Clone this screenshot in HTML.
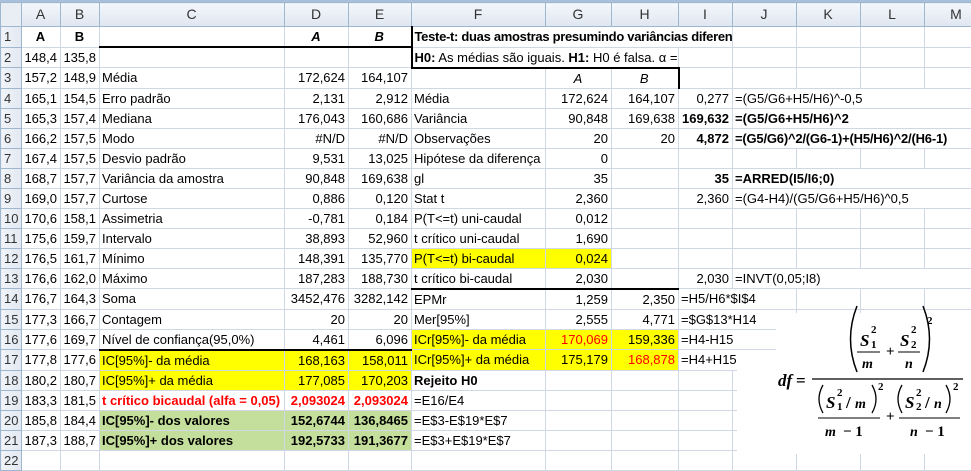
<!DOCTYPE html>
<html><head><meta charset="utf-8"><style>
body{margin:0;width:971px;height:454px;overflow:hidden;background:#fff;position:relative;font-family:"Liberation Sans",Arial,sans-serif;font-size:13px;color:#000}
table{border-collapse:collapse;table-layout:fixed;width:989px;position:absolute;left:0;top:2px}
td{border:1px solid #d0d7e5;height:19px;padding:0 3px 0 2px;white-space:nowrap;overflow:hidden;line-height:19px}
tr.h td{background:linear-gradient(#f4f7fb,#dfe6f0);border-color:#9eb6ce;text-align:center;color:#333;height:23px;font-size:14px}
td.rh{background:linear-gradient(90deg,#f1f4f9,#e2e8f1);border-color:#9eb6ce;text-align:left;color:#333;padding-left:3px}
.r{text-align:right}.c{text-align:center}.b{font-weight:bold}.i{font-style:italic}
.y{background:#ffff00}.g{background:#c4df9b}.red{color:#ff0000}
.bb{border-bottom:2px solid #000}.bl{border-left:2px solid #000}.br{border-right:2px solid #000}
.topbar{position:absolute;left:0;top:0;width:971px;height:3px;background:#a9c0dd}
</style></head><body>
<div class="topbar"></div>
<table>
<colgroup><col style="width:21px"><col style="width:39px"><col style="width:39px"><col style="width:185px"><col style="width:64px"><col style="width:63px"><col style="width:134px"><col style="width:66px"><col style="width:67px"><col style="width:54px"><col style="width:64px"><col style="width:64px"><col style="width:64px"><col style="width:64px"></colgroup>
<tr class="h"><td style="background:#e9eef5"></td><td>A</td><td>B</td><td>C</td><td>D</td><td>E</td><td>F</td><td>G</td><td>H</td><td>I</td><td>J</td><td>K</td><td>L</td><td>M</td></tr>
<tr><td class="rh">1</td><td class="c b">A</td><td class="c b">B</td><td class="bb"></td><td class="c b i bb">A</td><td class="c b i bb">B</td><td colspan="4" class="b bl" style="letter-spacing:-0.3px">Teste-t: duas amostras presumindo variâncias diferentes</td><td></td><td></td><td></td><td></td></tr>
<tr><td class="rh">2</td><td class="r">148,4</td><td class="r">135,8</td><td></td><td></td><td></td><td colspan="3" class="bb bl"><b>H0:</b> As médias são iguais. <b>H1:</b> H0 é falsa. α = 0,05.</td><td></td><td></td><td></td><td></td><td></td></tr>
<tr><td class="rh">3</td><td class="r">157,2</td><td class="r">148,9</td><td>Média</td><td class="r">172,624</td><td class="r">164,107</td><td></td><td class="c i">A</td><td class="c i br">B</td><td></td><td></td><td></td><td></td><td></td></tr>
<tr><td class="rh">4</td><td class="r">165,1</td><td class="r">154,5</td><td>Erro padrão</td><td class="r">2,131</td><td class="r">2,912</td><td>Média</td><td class="r">172,624</td><td class="r">164,107</td><td class="r">0,277</td><td colspan="4">=(G5/G6+H5/H6)^-0,5</td></tr>
<tr><td class="rh">5</td><td class="r">165,3</td><td class="r">157,4</td><td>Mediana</td><td class="r">176,043</td><td class="r">160,686</td><td>Variância</td><td class="r">90,848</td><td class="r">169,638</td><td class="r b">169,632</td><td colspan="4" class="b">=(G5/G6+H5/H6)^2</td></tr>
<tr><td class="rh">6</td><td class="r">166,2</td><td class="r">157,5</td><td>Modo</td><td class="r">#N/D</td><td class="r">#N/D</td><td>Observações</td><td class="r">20</td><td class="r">20</td><td class="r b">4,872</td><td colspan="4" class="b" style="letter-spacing:-0.2px">=(G5/G6)^2/(G6-1)+(H5/H6)^2/(H6-1)</td></tr>
<tr><td class="rh">7</td><td class="r">167,4</td><td class="r">157,5</td><td>Desvio padrão</td><td class="r">9,531</td><td class="r">13,025</td><td>Hipótese da diferença</td><td class="r">0</td><td></td><td></td><td></td><td></td><td></td><td></td></tr>
<tr><td class="rh">8</td><td class="r">168,7</td><td class="r">157,7</td><td>Variância da amostra</td><td class="r">90,848</td><td class="r">169,638</td><td>gl</td><td class="r">35</td><td></td><td class="r b">35</td><td colspan="4" class="b">=ARRED(I5/I6;0)</td></tr>
<tr><td class="rh">9</td><td class="r">169,0</td><td class="r">157,7</td><td>Curtose</td><td class="r">0,886</td><td class="r">0,120</td><td>Stat t</td><td class="r">2,360</td><td></td><td class="r">2,360</td><td colspan="4">=(G4-H4)/(G5/G6+H5/H6)^0,5</td></tr>
<tr><td class="rh">10</td><td class="r">170,6</td><td class="r">158,1</td><td>Assimetria</td><td class="r">-0,781</td><td class="r">0,184</td><td>P(T&lt;=t) uni-caudal</td><td class="r">0,012</td><td></td><td></td><td></td><td></td><td></td><td></td></tr>
<tr><td class="rh">11</td><td class="r">175,6</td><td class="r">159,7</td><td>Intervalo</td><td class="r">38,893</td><td class="r">52,960</td><td>t crítico uni-caudal</td><td class="r">1,690</td><td></td><td></td><td></td><td></td><td></td><td></td></tr>
<tr><td class="rh">12</td><td class="r">176,5</td><td class="r">161,7</td><td>Mínimo</td><td class="r">148,391</td><td class="r">135,770</td><td class="y">P(T&lt;=t) bi-caudal</td><td class="r y">0,024</td><td></td><td></td><td></td><td></td><td></td><td></td></tr>
<tr><td class="rh">13</td><td class="r">176,6</td><td class="r">162,0</td><td>Máximo</td><td class="r">187,283</td><td class="r">188,730</td><td class="bb">t crítico bi-caudal</td><td class="r bb">2,030</td><td class="bb"></td><td class="r">2,030</td><td colspan="4">=INVT(0,05;I8)</td></tr>
<tr><td class="rh">14</td><td class="r">176,7</td><td class="r">164,3</td><td>Soma</td><td class="r">3452,476</td><td class="r">3282,142</td><td>EPMr</td><td class="r">1,259</td><td class="r">2,350</td><td colspan="2">=H5/H6*$I$4</td><td></td><td></td><td></td></tr>
<tr><td class="rh">15</td><td class="r">177,3</td><td class="r">166,7</td><td>Contagem</td><td class="r">20</td><td class="r">20</td><td>Mer[95%]</td><td class="r">2,555</td><td class="r">4,771</td><td colspan="2">=$G$13*H14</td><td></td><td></td><td></td></tr>
<tr><td class="rh">16</td><td class="r">177,6</td><td class="r">169,7</td><td class="bb">Nível de confiança(95,0%)</td><td class="r bb">4,461</td><td class="r bb">6,096</td><td class="y">ICr[95%]- da média</td><td class="r y red">170,069</td><td class="r y">159,336</td><td colspan="2">=H4-H15</td><td></td><td></td><td></td></tr>
<tr><td class="rh">17</td><td class="r">177,8</td><td class="r">177,6</td><td class="y">IC[95%]- da média</td><td class="r y">168,163</td><td class="r y">158,011</td><td class="y">ICr[95%]+ da média</td><td class="r y">175,179</td><td class="r y red">168,878</td><td colspan="2">=H4+H15</td><td></td><td></td><td></td></tr>
<tr><td class="rh">18</td><td class="r">180,2</td><td class="r">180,7</td><td class="y">IC[95%]+ da média</td><td class="r y">177,085</td><td class="r y">170,203</td><td class="b">Rejeito H0</td><td></td><td></td><td></td><td></td><td></td><td></td><td></td></tr>
<tr><td class="rh">19</td><td class="r">183,3</td><td class="r">181,5</td><td class="b red">t crítico bicaudal (alfa = 0,05)</td><td class="r b red">2,093024</td><td class="r b red">2,093024</td><td>=E16/E4</td><td></td><td></td><td></td><td></td><td></td><td></td><td></td></tr>
<tr><td class="rh">20</td><td class="r">185,8</td><td class="r">184,4</td><td class="b g">IC[95%]- dos valores</td><td class="r b g">152,6744</td><td class="r b g">136,8465</td><td>=E$3-E$19*E$7</td><td></td><td></td><td></td><td></td><td></td><td></td><td></td></tr>
<tr><td class="rh">21</td><td class="r">187,3</td><td class="r">188,7</td><td class="b g">IC[95%]+ dos valores</td><td class="r b g">192,5733</td><td class="r b g">191,3677</td><td>=E$3+E$19*E$7</td><td></td><td></td><td></td><td></td><td></td><td></td><td></td></tr>
<tr><td class="rh">22</td><td></td><td></td><td></td><td></td><td></td><td></td><td></td><td></td><td></td><td></td><td></td><td></td><td></td></tr>
</table>
<div style="position:absolute;left:776px;top:313px;width:195px;height:141px;background:#fff"></div>
<div style="position:absolute;left:737px;top:366px;width:234px;height:88px;background:#fff"></div>
<svg style="position:absolute;left:0;top:0" width="971" height="454" font-family="Liberation Serif,serif" font-weight="bold" font-style="italic">
<text x="778" y="386" font-size="17">df</text><text x="796" y="386" font-size="17" font-style="normal">=</text>
<line x1="812" y1="379" x2="963" y2="379" stroke="#000" stroke-width="1.3"/>
<path d="M857 306 Q844 339 857 372" fill="none" stroke="#000" stroke-width="1.5"/>
<path d="M923 306 Q936 339 923 372" fill="none" stroke="#000" stroke-width="1.5"/>
<text x="860" y="346" font-size="17">S</text><text x="871" y="333" font-size="11" font-style="normal">2</text><text x="871" y="348" font-size="11" font-style="normal">1</text>
<line x1="857" y1="352" x2="880" y2="352" stroke="#000"/>
<text x="862" y="368" font-size="14">m</text>
<text x="886" y="356" font-size="15" font-style="normal">+</text>
<text x="900" y="346" font-size="17">S</text><text x="911" y="333" font-size="11" font-style="normal">2</text><text x="911" y="348" font-size="11" font-style="normal">2</text>
<line x1="898" y1="352" x2="920" y2="352" stroke="#000"/>
<text x="905" y="368" font-size="14">n</text>
<text x="927" y="324" font-size="11" font-style="normal">2</text>
<path d="M823 385 Q815 399 823 413" fill="none" stroke="#000" stroke-width="1.3"/>
<text x="826" y="408" font-size="17">S</text><text x="837" y="396" font-size="11" font-style="normal">2</text><text x="837" y="410" font-size="11" font-style="normal">1</text>
<text x="846" y="408" font-size="17" font-style="normal">/</text><text x="855" y="408" font-size="14">m</text>
<path d="M872 385 Q880 399 872 413" fill="none" stroke="#000" stroke-width="1.3"/>
<text x="878" y="390" font-size="11" font-style="normal">2</text>
<line x1="818" y1="418" x2="880" y2="418" stroke="#000"/>
<text x="825" y="436" font-size="14">m</text><text x="843" y="436" font-size="15" font-style="normal">− 1</text>
<text x="886" y="421" font-size="15" font-style="normal">+</text>
<path d="M902 385 Q894 399 902 413" fill="none" stroke="#000" stroke-width="1.3"/>
<text x="905" y="408" font-size="17">S</text><text x="916" y="396" font-size="11" font-style="normal">2</text><text x="916" y="410" font-size="11" font-style="normal">2</text>
<text x="925" y="408" font-size="17" font-style="normal">/</text><text x="934" y="408" font-size="14">n</text>
<path d="M946 385 Q954 399 946 413" fill="none" stroke="#000" stroke-width="1.3"/>
<text x="953" y="390" font-size="11" font-style="normal">2</text>
<line x1="899" y1="418" x2="960" y2="418" stroke="#000"/>
<text x="910" y="436" font-size="14">n</text><text x="925" y="436" font-size="15" font-style="normal">− 1</text>
</svg>
</body></html>
